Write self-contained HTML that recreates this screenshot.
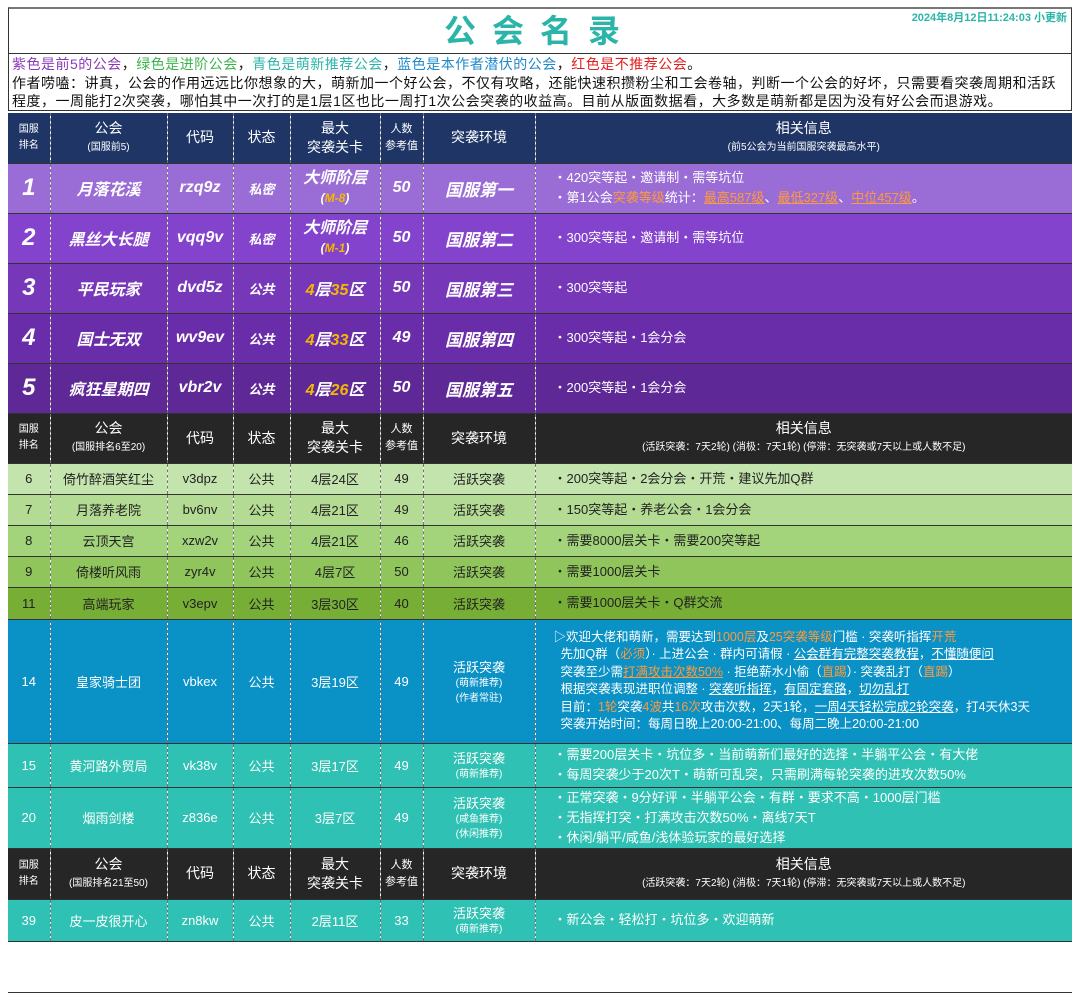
<!DOCTYPE html>
<html><head><meta charset="utf-8"><style>
body{margin:0;width:1080px;height:1000px;background:#fff;font-family:"Liberation Sans","Noto Sans CJK SC",sans-serif;position:relative;overflow:hidden}
.top{position:absolute;left:8px;top:7px;width:1064px;height:104px;border:1px solid #333;border-top:2px solid #777;box-sizing:border-box}
.title{position:absolute;left:0;right:0;top:2px;text-align:center;font-size:32px;line-height:40px;font-weight:bold;color:#2bb5a8;letter-spacing:16px}
.date{position:absolute;right:4px;top:0px;font-size:11px;font-weight:bold;color:#2bb5a8}
.desc{position:absolute;left:0;right:0;top:44px;border-top:1px solid #333;padding:1px 3px;font-size:14px;line-height:18.5px;color:#111;letter-spacing:0.5px}
table{position:absolute;left:8px;top:113px;border-collapse:collapse;table-layout:fixed;width:1064px;font-family:"Liberation Sans","Noto Sans CJK SC",sans-serif}
td{border-left:1px dashed rgba(0,0,0,.55);text-align:center;padding:0;font-size:13px;overflow:hidden;white-space:nowrap}
td:first-child{border-left:none}
tr{border-bottom:1px solid #333}
.h td{color:#fff;font-size:14px;line-height:19px}
.h small{font-size:10px;display:block}
.nv{background:#1e3566}.dk{background:#262626}
.p td{color:#fff;font-weight:bold;font-style:italic;font-size:16px}
.p td.r{font-size:24px}
.p td.e{font-size:17px}
.p td.i,.g td.i,.b td.i,.t td.i{text-align:left;padding-left:18px;font-style:normal;font-weight:normal;font-size:13px;line-height:20px}
.y{color:#f5b800}
.o{color:#ff9a3c}
.g td{color:#222}
.b td,.t td{color:#fff}
.b td.i{padding-left:18px;line-height:17.5px;font-size:12.5px}
.sm{font-size:10px;display:block;line-height:15px}
.bl{position:absolute;left:8px;top:992px;width:1064px;border-top:1px solid #333}
</style></head><body>
<div class="top">
<div class="title">公会名录</div>
<div class="date">2024年8月12日11:24:03 小更新</div>
<div class="desc"><span style="color:#8a3ab9">紫色是前5的公会</span>，<span style="color:#3cb34a">绿色是进阶公会</span>，<span style="color:#2bb5a8">青色是萌新推荐公会</span>，<span style="color:#1e88c8">蓝色是本作者潜伏的公会</span>，<span style="color:#e02020">红色是不推荐公会</span>。<br>作者唠嗑：讲真，公会的作用远远比你想象的大，萌新加一个好公会，不仅有攻略，还能快速积攒粉尘和工会卷轴，判断一个公会的好坏，只需要看突袭周期和活跃程度，一周能打2次突袭，哪怕其中一次打的是1层1区也比一周打1次公会突袭的收益高。目前从版面数据看，大多数是萌新都是因为没有好公会而退游戏。</div>
</div>
<table>
<colgroup><col style="width:42px"><col style="width:117px"><col style="width:66px"><col style="width:57px"><col style="width:90px"><col style="width:43px"><col style="width:112px"><col style="width:537px"></colgroup>
<tr class="h nv" style="height:50px"><td style="font-size:10px;line-height:16px">国服<br>排名</td><td>公会<small>(国服前5)</small></td><td>代码</td><td>状态</td><td>最大<br>突袭关卡</td><td style="font-size:11px;line-height:17px">人数<br>参考值</td><td>突袭环境</td><td>相关信息<small>(前5公会为当前国服突袭最高水平)</small></td></tr>
<tr class="p" style="height:50px;background:#9a6dd6"><td class="r">1</td><td>月落花溪</td><td>rzq9z</td><td style="font-size:13px">私密</td><td style="line-height:19px">大师阶层<br><span style="font-size:12px">(<span class="y">M-8</span>)</span></td><td>50</td><td class="e">国服第一</td><td class="i">・420突等起・邀请制・需等坑位<br>・第1公会<span class="o">突袭等级</span>统计：<u class="o">最高587级</u>、<u class="o">最低327级</u>、<u class="o">中位457级</u>。</td></tr>
<tr class="p" style="height:50px;background:#8443cc"><td class="r">2</td><td>黑丝大长腿</td><td>vqq9v</td><td style="font-size:13px">私密</td><td style="line-height:19px">大师阶层<br><span style="font-size:12px">(<span class="y">M-1</span>)</span></td><td>50</td><td class="e">国服第二</td><td class="i">・300突等起・邀请制・需等坑位</td></tr>
<tr class="p" style="height:50px;background:#7637b9"><td class="r">3</td><td>平民玩家</td><td>dvd5z</td><td style="font-size:13px">公共</td><td><span class="y">4</span>层<span class="y">35</span>区</td><td>50</td><td class="e">国服第三</td><td class="i">・300突等起</td></tr>
<tr class="p" style="height:50px;background:#6a2daa"><td class="r">4</td><td>国士无双</td><td>wv9ev</td><td style="font-size:13px">公共</td><td><span class="y">4</span>层<span class="y">33</span>区</td><td>49</td><td class="e">国服第四</td><td class="i">・300突等起・1会分会</td></tr>
<tr class="p" style="height:50px;background:#5e2896"><td class="r">5</td><td>疯狂星期四</td><td>vbr2v</td><td style="font-size:13px">公共</td><td><span class="y">4</span>层<span class="y">26</span>区</td><td>50</td><td class="e">国服第五</td><td class="i">・200突等起・1会分会</td></tr>
<tr class="h dk" style="height:50px"><td style="font-size:10px;line-height:16px">国服<br>排名</td><td>公会<small>(国服排名6至20)</small></td><td>代码</td><td>状态</td><td>最大<br>突袭关卡</td><td style="font-size:11px;line-height:17px">人数<br>参考值</td><td>突袭环境</td><td>相关信息<small>(活跃突袭：7天2轮) (消极：7天1轮) (停滞：无突袭或7天以上或人数不足)</small></td></tr>
<tr class="g" style="height:31px;background:#c4e4ad"><td>6</td><td>倚竹醉酒笑红尘</td><td>v3dpz</td><td>公共</td><td>4层24区</td><td>49</td><td>活跃突袭</td><td class="i">・200突等起・2会分会・开荒・建议先加Q群</td></tr>
<tr class="g" style="height:31px;background:#b3db93"><td>7</td><td>月落养老院</td><td>bv6nv</td><td>公共</td><td>4层21区</td><td>49</td><td>活跃突袭</td><td class="i">・150突等起・养老公会・1会分会</td></tr>
<tr class="g" style="height:31px;background:#a3d37b"><td>8</td><td>云顶天宫</td><td>xzw2v</td><td>公共</td><td>4层21区</td><td>46</td><td>活跃突袭</td><td class="i">・需要8000层关卡・需要200突等起</td></tr>
<tr class="g" style="height:31px;background:#8fc55b"><td>9</td><td>倚楼听风雨</td><td>zyr4v</td><td>公共</td><td>4层7区</td><td>50</td><td>活跃突袭</td><td class="i">・需要1000层关卡</td></tr>
<tr class="g" style="height:32px;background:#77ae35"><td>11</td><td>高端玩家</td><td>v3epv</td><td>公共</td><td>3层30区</td><td>40</td><td>活跃突袭</td><td class="i">・需要1000层关卡・Q群交流</td></tr>
<tr class="b" style="height:124px;background:#0a91c6"><td>14</td><td>皇家骑士团</td><td>vbkex</td><td>公共</td><td>3层19区</td><td>49</td><td>活跃突袭<span class="sm">(萌新推荐)</span><span class="sm">(作者常驻)</span></td><td class="i" style="padding-left:18px">▷欢迎大佬和萌新，需要达到<span class="o">1000层</span>及<span class="o">25突袭等级</span>门槛 · 突袭听指挥<span class="o">开荒</span><br>&nbsp;&nbsp;先加Q群（<span class="o">必须</span>）· 上进公会 · 群内可请假 · <u>公会群有完整突袭教程</u>，<u>不懂随便问</u><br>&nbsp;&nbsp;突袭至少需<u class="o">打满攻击次数50%</u> · 拒绝薪水小偷（<span class="o">直踢</span>）· 突袭乱打（<span class="o">直踢</span>）<br>&nbsp;&nbsp;根据突袭表现进职位调整 · <u>突袭听指挥</u>，<u>有固定套路</u>，<u>切勿乱打</u><br>&nbsp;&nbsp;目前：<span class="o">1轮</span>突袭<span class="o">4波</span>共<span class="o">16次</span>攻击次数，2天1轮，<u>一周4天轻松完成2轮突袭</u>，打4天休3天<br>&nbsp;&nbsp;突袭开始时间：每周日晚上20:00-21:00、每周二晚上20:00-21:00</td></tr>
<tr class="t" style="height:44px;background:#2fc1b3"><td>15</td><td>黄河路外贸局</td><td>vk38v</td><td>公共</td><td>3层17区</td><td>49</td><td>活跃突袭<span class="sm">(萌新推荐)</span></td><td class="i">・需要200层关卡・坑位多・当前萌新们最好的选择・半躺平公会・有大佬<br>・每周突袭少于20次T・萌新可乱突，只需刷满每轮突袭的进攻次数50%</td></tr>
<tr class="t" style="height:61px;background:#2fc1b3"><td>20</td><td>烟雨剑楼</td><td>z836e</td><td>公共</td><td>3层7区</td><td>49</td><td>活跃突袭<span class="sm">(咸鱼推荐)</span><span class="sm">(休闲推荐)</span></td><td class="i">・正常突袭・9分好评・半躺平公会・有群・要求不高・1000层门槛<br>・无指挥打突・打满攻击次数50%・离线7天T<br>・休闲/躺平/咸鱼/浅体验玩家的最好选择</td></tr>
<tr class="h dk" style="height:51px"><td style="font-size:10px;line-height:16px">国服<br>排名</td><td>公会<small>(国服排名21至50)</small></td><td>代码</td><td>状态</td><td>最大<br>突袭关卡</td><td style="font-size:11px;line-height:17px">人数<br>参考值</td><td>突袭环境</td><td>相关信息<small>(活跃突袭：7天2轮) (消极：7天1轮) (停滞：无突袭或7天以上或人数不足)</small></td></tr>
<tr class="t" style="height:42px;background:#2fc1b3"><td>39</td><td>皮一皮很开心</td><td>zn8kw</td><td>公共</td><td>2层11区</td><td>33</td><td>活跃突袭<span class="sm">(萌新推荐)</span></td><td class="i">・新公会・轻松打・坑位多・欢迎萌新</td></tr>
</table>
<div class="bl"></div>
</body></html>
